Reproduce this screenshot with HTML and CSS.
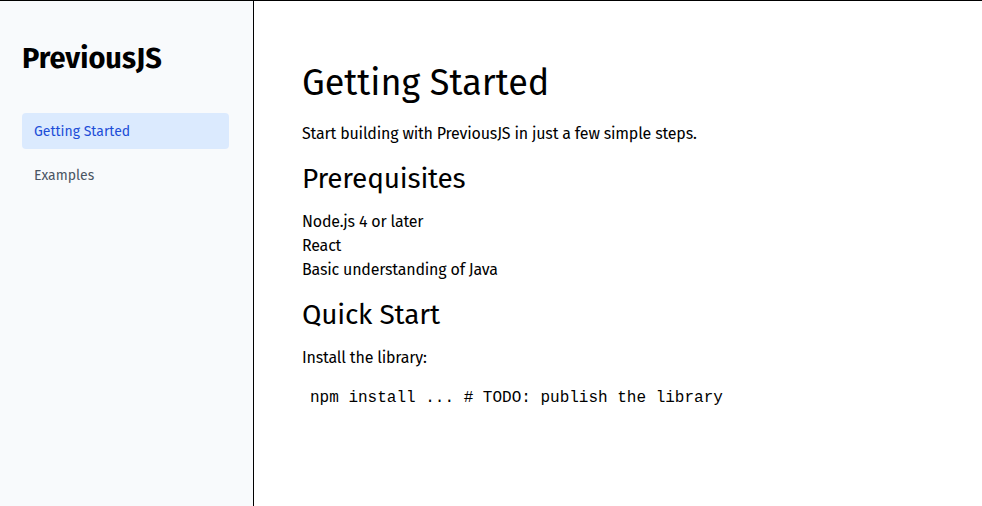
FILE: index.html
```html
<!DOCTYPE html>
<html>
<head>
<meta charset="utf-8">
<link rel="stylesheet" href="styles.css">
</head>
<body>
<div class="app">
  <aside class="sidebar">
    <div class="brand">PreviousJS</div>
    <nav class="nav">
      <a class="nav-item active">Getting Started</a>
      <a class="nav-item">Examples</a>
    </nav>
  </aside>
  <main class="content">
    <h1>Getting Started</h1>
    <p>Start building with PreviousJS in just a few simple steps.</p>
    <h2>Prerequisites</h2>
    <ul class="list">
      <li>Node.js 4 or later</li>
      <li>React</li>
      <li>Basic understanding of Java</li>
    </ul>
    <h2>Quick Start</h2>
    <p>Install the library:</p>
    <pre class="code">npm install ... # TODO: publish the library</pre>
  </main>
</div>
</body>
</html>
```
FILE: styles.css
```css
* { box-sizing: border-box; }
html, body { margin: 0; padding: 0; height: 100%; }
body {
  font-family: "Fira Sans", system-ui, sans-serif;
  color: #000;
  background: #fff;
}
.app {
  display: flex;
  height: 506px;
  border-top: 1px solid #000;
}
.sidebar {
  width: 254px;
  flex: none;
  background: #f8fafc;
  border-right: 1px solid #000;
  padding: 40px 24px 0 22px;
}
.brand {
  font-size: 29px;
  font-weight: 700;
  line-height: 36px;
  margin-bottom: 36px;
}
.nav { display: flex; flex-direction: column; gap: 8px; }
.nav-item {
  display: block;
  height: 36px;
  line-height: 37px;
  padding: 0 12px;
  font-size: 14px;
  color: #4b5563;
  border-radius: 4px;
}
.nav-item.active {
  background: #dbeafe;
  color: #1d4ed8;
}
.content {
  flex: 1;
  padding: 58px 48px 0 48px;
}
h1 {
  font-size: 36px;
  font-weight: 400;
  line-height: 48px;
  margin: 0 0 15px;
}
h2 {
  font-size: 28px;
  font-weight: 400;
  letter-spacing: -0.2px;
  line-height: 36px;
  margin: 15px 0 13px;
}
p, .list {
  font-size: 16px;
  line-height: 24px;
  letter-spacing: -0.19px;
  margin: 0;
}
.list { list-style: none; padding: 0; }
.code {
  font-family: "Liberation Mono", monospace;
  font-size: 16px;
  line-height: 24px;
  margin: 16px 0 0;
  padding: 0 8px;
}
```
